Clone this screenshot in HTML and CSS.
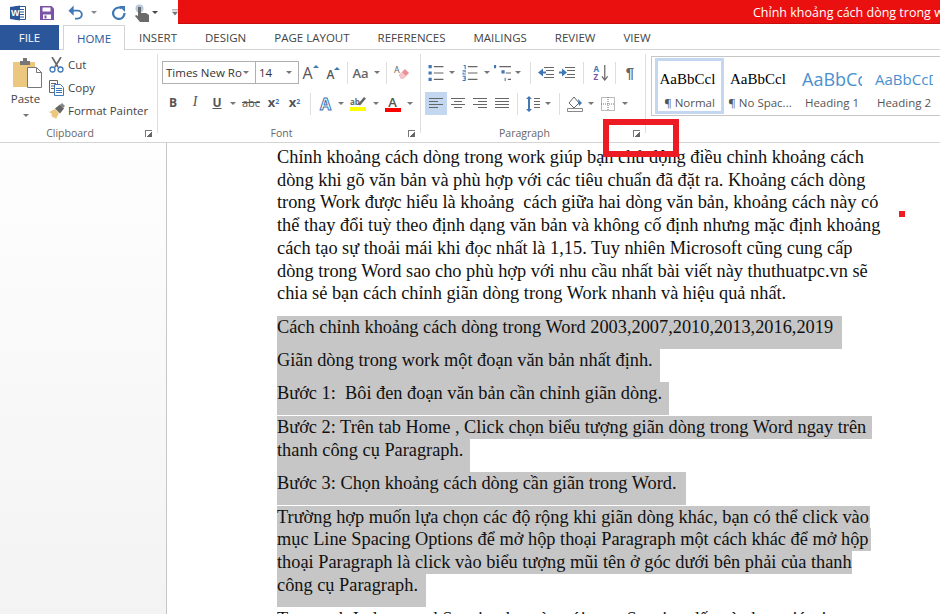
FILE: index.html
```html
<!DOCTYPE html>
<html lang="vi">
<head>
<meta charset="utf-8">
<title>Chỉnh khoảng cách dòng trong work - Word</title>
<link rel="stylesheet" href="styles.css">
</head>
<body>
<div class="app">
  <header class="titlebar">
    <div class="qat">
      <svg class="q q-word" viewBox="0 0 16 16"><path fill="#fff" stroke="#2b579a" d="M5.5 1.5h10v13h-10z"/><path stroke="#2b579a" d="M9 4.5h5M9 7h5M9 9.500h5M9 12h5"/><path fill="#2b579a" d="M0 2l10-1.500v15L0 14z"/><text x="1" y="11" class="word-w">W</text></svg>
      <svg class="q q-save" viewBox="0 0 14 14"><path fill="#7b52a6" d="M0 0h11.500L14 2.500V14H0z"/><path fill="#fff" d="M2.500 1.500h8v4h-8zM3 8.500h8V13H3z"/><path fill="#7b52a6" d="M4.500 9.500h2v3h-2z"/></svg>
      <svg class="q q-undo" viewBox="0 0 15 16"><path fill="none" stroke="#3f78b5" stroke-width="2" d="M3 6h7a4 4 0 0 1 0 8.500H7"/><path fill="#3f78b5" d="M5.500 .5v11L0 6z"/></svg>
      <span class="qcaret q-c1"></span>
      <svg class="q q-redo" viewBox="0 0 14 14"><path fill="none" stroke="#3f78b5" stroke-width="2.200" d="M9.500 2.200a5.700 5.700 0 1 0 3 4.800"/><path fill="#3f78b5" d="M7 0h6v6z"/></svg>
      <svg class="q q-touch" viewBox="0 0 14 18"><circle cx="4.500" cy="4.500" r="4" fill="#b7c9dc"/><path fill="#6a6a6a" d="M3 3h3v6h5l3 2v7H5l-5-6 1-1 2 1z"/></svg>
      <span class="qcaret dark q-c2"></span>
      <svg class="q q-cust" viewBox="0 0 8 8"><path fill="#777" d="M0 0h8v1H0zM0 3h8L4 8z"/></svg>
    </div>
    <div class="redbar"><span class="doc-title">Chỉnh khoảng cách dòng trong work - Word</span></div>
  </header>

  <nav class="tabs">
    <span class="tab file">FILE</span>
    <span class="tab home">HOME</span>
    <span class="tab">INSERT</span>
    <span class="tab">DESIGN</span>
    <span class="tab">PAGE LAYOUT</span>
    <span class="tab">REFERENCES</span>
    <span class="tab">MAILINGS</span>
    <span class="tab">REVIEW</span>
    <span class="tab">VIEW</span>
  </nav>

  <section class="ribbon">
    <div class="group g-clip">
      <div class="clip-body">
        <div class="paste">
          <svg class="paste-ico" viewBox="0 0 29 30"><path fill="#ebc77f" d="M0 4h22v25H0z"/><path fill="#777" d="M7 3h3V0h4v3h3v4H7z"/><path fill="#fff" stroke="#777" d="M14.500 9.500h9l5 5v15h-14z"/><path fill="none" stroke="#777" d="M23.500 9.500v5h5"/></svg>
          <span class="paste-label">Paste</span>
          <span class="caret"></span>
        </div>
        <div class="clip-list">
          <div class="clip-item"><svg viewBox="0 0 15 16"><path fill="none" stroke="#6a6a6a" stroke-width="1.700" d="M3 0l6 10M12 0L6 10"/><circle cx="3.500" cy="12.500" r="2.500" fill="none" stroke="#3f78b5" stroke-width="1.300"/><circle cx="11.500" cy="12.500" r="2.500" fill="none" stroke="#3f78b5" stroke-width="1.300"/></svg><span>Cut</span></div>
          <div class="clip-item"><svg viewBox="0 0 15 16"><path fill="#fff" stroke="#666" d="M.5 .5h8v12h-8z"/><path stroke="#666" d="M2 3.500h5M2 6h3M2 8.500h3"/><path fill="#fff" stroke="#3f78b5" d="M5.500 4.500h6l3 3v8h-9z"/><path stroke="#3f78b5" d="M7 8.500h6M7 10.500h6M7 12.500h6"/></svg><span>Copy</span></div>
          <div class="clip-item"><svg viewBox="0 0 16 16"><path fill="#ebc77f" d="M0 9l6-3 4 4-3 6-2-2-1 1-1-2-1 0 1-2z"/><path fill="#666" d="M6 5.500l5-4 4 4-4 5z"/><path fill="#888" d="M11 2l2-2 3 3-2 2z"/></svg><span>Format Painter</span></div>
        </div>
      </div>
      <div class="group-label"><span>Clipboard</span><i class="launcher"></i></div>
    </div>

    <div class="group g-font">
      <div class="rows">
        <div class="row">
          <div class="combo font-name"><span>Times New Ro</span><span class="caret"></span></div>
          <div class="combo font-size"><span>14</span><span class="caret"></span></div>
          <span class="b s23 letter big">A<i class="up"></i></span>
          <span class="b s23 letter mid">A<i class="up"></i></span>
          <span class="b s4"><i class="sep"></i></span>
          <span class="b s23 letter aa">Aa</span>
          <span class="b s10"><span class="caret"></span></span>
          <span class="b s8"><i class="sep"></i></span>
          <span class="b s24"><svg class="i16" viewBox="0 0 16 16"><path fill="#ee8f96" d="M5 10l6-6 4 4-6 6H7z"/><path fill="#f4c6c9" d="M5 10l3-3 4 4-3 3H7z"/><text x="0" y="8" class="eraser-a">A</text></svg></span>
        </div>
        <div class="row">
          <span class="b s22 bt">B</span>
          <span class="b s22 bt it">I</span>
          <span class="b s22 bt ul">U</span>
          <span class="b s10"><span class="caret"></span></span>
          <span class="b s26 abc">abc</span>
          <span class="b s19 bt sm">x<sub>2</sub></span>
          <span class="b s23 bt sm">x<sup>2</sup></span>
          <span class="b s9"><i class="sep"></i></span>
          <span class="b s21"><span class="effect-a">A</span></span>
          <span class="b s9"><span class="caret"></span></span>
          <span class="b s26"><span class="color-btn hl"><svg viewBox="0 0 16 11"><text x="0" y="9" class="hl-t">ab</text><path fill="#666" d="M8 8l6-7 2 1.500-6 7z"/></svg><i></i></span></span>
          <span class="b s9"><span class="caret"></span></span>
          <span class="b s25"><span class="color-btn fc"><span>A</span><i></i></span></span>
          <span class="b s9"><span class="caret"></span></span>
        </div>
      </div>
      <div class="group-label"><span>Font</span><i class="launcher"></i></div>
    </div>

    <div class="group g-para">
      <div class="rows">
        <div class="row">
          <span class="b s22"><svg class="i16" viewBox="0 0 14 15"><path fill="#3f78b5" d="M0 0h3v3H0zM0 6h3v3H0zM0 12h3v3H0z"/><path fill="#666" d="M5 1h9v1H5zM5 7h9v1H5zM5 13h9v1H5z"/></svg></span>
          <span class="b s10"><span class="caret"></span></span>
          <span class="b s25"><svg class="i16" viewBox="0 0 14 15"><path fill="#3f78b5" d="M1 0h2v4H2V1H1zM0 5h3v2H1v1h2v1H0V7h2V6H0zM0 10h3v5H0v-1h2v-1H1v-1h1v-1H0z"/><path fill="#666" d="M5 1h9v1H5zM5 7h9v1H5zM5 13h9v1H5z"/></svg></span>
          <span class="b s9"><span class="caret"></span></span>
          <span class="b s22"><svg class="i17" viewBox="0 0 16 15"><path fill="#3f78b5" d="M0 0h2v3H0zM7 5h3v3H7zM10 12h1v3h-1z"/><path fill="#666" d="M5 1h11v1H5zM11 7h5v1h-5zM13 13h3v1h-3z"/></svg></span>
          <span class="b s10"><span class="caret"></span></span>
          <span class="b s14"><i class="sep"></i></span>
          <span class="b s18"><svg class="i16" viewBox="0 0 16 12"><path fill="#666" d="M6 0h10v1H6zM8 3h8v1H8zM8 7h8v1H8zM6 10h10v1H6z"/><path fill="#3f78b5" d="M0 5.500L5 1.500v3h3v2H5v3z"/></svg></span>
          <span class="b s24"><svg class="i16" viewBox="0 0 16 12"><path fill="#666" d="M6 0h10v1H6zM8 3h8v1H8zM8 7h8v1H8zM6 10h10v1H6z"/><path fill="#3f78b5" d="M8 5.500L3 1.500v3H0v2h3v3z"/></svg></span>
          <span class="b s8"><i class="sep"></i></span>
          <span class="b s27"><svg class="i16" viewBox="0 0 16 17"><text x="0" y="7" class="az a">A</text><text x="0" y="16" class="az z">Z</text><path stroke="#666" stroke-width="1.300" d="M12 0v15"/><path fill="none" stroke="#666" stroke-width="1.300" d="M9 12l3 4 3-4"/></svg></span>
          <span class="b s2"><i class="sep"></i></span>
          <span class="b s28 pilcrow">¶</span>
        </div>
        <div class="row">
          <span class="b s22 on"><svg class="i14" viewBox="0 0 14 11"><path fill="#666" d="M0 0h14v1H0zM0 3h9v1H0zM0 6h14v1H0zM0 9h9v1H0z"/></svg></span>
          <span class="b s22"><svg class="i14" viewBox="0 0 14 11"><path fill="#666" d="M0 0h14v1H0zM3 3h8v1H3zM0 6h14v1H0zM3 9h8v1H3z"/></svg></span>
          <span class="b s22"><svg class="i14" viewBox="0 0 14 11"><path fill="#666" d="M0 0h14v1H0zM5 3h9v1H5zM0 6h14v1H0zM5 9h9v1H5z"/></svg></span>
          <span class="b s22"><svg class="i14" viewBox="0 0 14 11"><path fill="#666" d="M0 0h14v1H0zM0 3h14v1H0zM0 6h14v1H0zM0 9h14v1H0z"/></svg></span>
          <span class="b s8"><i class="sep"></i></span>
          <span class="b s23"><svg class="i14 tall" viewBox="0 0 14 16"><path fill="#3f78b5" d="M0 3l3-3 3 3H4v10h2l-3 3-3-3h2V3z"/><path fill="#666" d="M8 2h6v1H8zM8 5h6v1H8zM8 8h6v1H8zM8 11h6v1H8z"/></svg></span>
          <span class="b s7"><span class="caret"></span></span>
          <span class="b s16"><i class="sep"></i></span>
          <span class="b s16"><svg class="i16" viewBox="0 0 16 16"><path fill="#fff" stroke="#666" d="M2 7l5-6 5 6-5 5z"/><path fill="#3f78b5" d="M11 3l4 4-3 3z"/><path fill="#fff" stroke="#888" d="M.5 12.500h15v3H.5z"/></svg></span>
          <span class="b s16"><span class="caret"></span></span>
          <span class="b s18"><svg class="i14 tall" viewBox="0 0 14 14"><path fill="none" stroke="#777" stroke-dasharray="1 1" d="M.5 .5h13v13H.5zM7 0v14M0 7h14"/></svg></span>
          <span class="b s16"><span class="caret"></span></span>
        </div>
      </div>
      <div class="group-label"><span>Paragraph</span><i class="launcher"></i></div>
    </div>

    <div class="g-styles">
      <div class="gallery">
        <div class="style-tile active"><span class="sample serif">AaBbCcl</span><span class="style-name">¶ Normal</span></div>
        <div class="style-tile w2"><span class="sample serif">AaBbCcl</span><span class="style-name">¶ No Spac...</span></div>
        <div class="style-tile w3"><span class="sample h1">AaBbCc</span><span class="style-name">Heading 1</span></div>
        <div class="style-tile w4"><span class="sample h2">AaBbCcD</span><span class="style-name">Heading 2</span></div>
      </div>
    </div>
  </section>

  <main class="workspace">
    <aside class="nav-pane"></aside>
    <article class="page">
      <p class="para intro">Chỉnh khoảng cách dòng trong work giúp bạn chủ động điều chỉnh khoảng cách
dòng khi gõ văn bản và phù hợp với các tiêu chuẩn đã đặt ra. Khoảng cách dòng
trong Work được hiểu là khoảng  cách giữa hai dòng văn bản, khoảng cách này có
thể thay đổi tuỳ theo định dạng văn bản và không cố định nhưng mặc định khoảng
cách tạo sự thoải mái khi đọc nhất là 1,15. Tuy nhiên Microsoft cũng cung cấp
dòng trong Word sao cho phù hợp với nhu cầu nhất bài viết này thuthuatpc.vn sẽ
chia sẻ bạn cách chỉnh giãn dòng trong Work nhanh và hiệu quả nhất.</p>
      <div class="sel-block">
        <span class="sel last w565">Cách chỉnh khoảng cách dòng trong Word 2003,2007,2010,2013,2016,2019</span>
        <span class="sel last w383">Giãn dòng trong work một đoạn văn bản nhất định.</span>
        <span class="sel last w392">Bước 1:  Bôi đen đoạn văn bản cần chỉnh giãn dòng.</span>
      </div>
      <div class="sel-block">
        <span class="sel w595">Bước 2: Trên tab Home , Click chọn biểu tượng giãn dòng trong Word ngay trên</span>
        <span class="sel last w193">thanh công cụ Paragraph.</span>
        <span class="sel last w409">Bước 3: Chọn khoảng cách dòng cần giãn trong Word.</span>
      </div>
      <div class="sel-block">
        <span class="sel w593">Trường hợp muốn lựa chọn các độ rộng khi giãn dòng khác, bạn có thể click vào</span>
        <span class="sel w594">mục Line Spacing Options để mở hộp thoại Paragraph một cách khác để mở hộp</span>
        <span class="sel w575">thoại Paragraph là click vào biểu tượng mũi tên ở góc dưới bên phải của thanh</span>
        <span class="sel last w149">công cụ Paragraph.</span>
      </div>
      <p class="para">Trong tab Indents and Spacing bạn tìm tới mục Spacing dấu và chọn giá trị</p>
    </article>
  </main>

  <i class="mark-box"></i>
  <i class="mark-dot"></i>
</div>
</body>
</html>
```

FILE: styles.css
```css
* { box-sizing: border-box; }
html, body { margin: 0; height: 100%; overflow: hidden; background: #fff; }
.app { position: relative; width: 940px; height: 614px; overflow: hidden; display: flex; flex-direction: column; font-family: "Open Sans", "Noto Sans", sans-serif; color: #444; }

/* title bar */
.titlebar { display: flex; height: 25px; flex: none; }
.qat { position: relative; width: 178px; flex: none; display: flex; align-items: center; }
.q { display: block; flex: none; }
.q-word { width: 16px; height: 16px; margin-left: 10px; }
.word-w { font: bold 9px "Liberation Sans", sans-serif; fill: #fff; }
.q-save { width: 14px; height: 14px; margin-left: 14px; }
.q-undo { width: 15px; height: 15px; margin-left: 14px; }
.q-c1 { margin-left: 8px; }
.q-redo { width: 14px; height: 14px; margin-left: 15px; }
.q-touch { width: 14px; height: 18px; margin-left: 9px; }
.q-c2 { margin-left: 3px; }
.q-cust { width: 6px; height: 7px; margin-left: 14px; }
.qcaret { width: 0; height: 0; flex: none; border: 3px solid transparent; border-top: 3px solid #888; border-bottom: 0; }
.qcaret.dark { border-top-color: #444; }
.redbar { flex: 1; height: 24px; background: #ea1010; border-bottom: 1px solid #c40d0d; padding-left: 575px; overflow: hidden; white-space: nowrap; }
.doc-title { color: #fff; font-size: 12.5px; line-height: 25px; }

/* tabs */
.tabs { height: 25px; flex: none; display: flex; align-items: stretch; border-bottom: 1px solid #d4d4d4; font-size: 11.5px; color: #444; }
.tab { display: flex; align-items: center; padding: 1px 14px 0; white-space: nowrap; }
.tab.file { width: 59px; justify-content: center; background: #2b579a; color: #fff; margin-bottom: -1px; margin-right: 4px; padding: 0; }
.tab.home { width: 62px; justify-content: center; padding: 0; color: #2b579a; background: #fff; border: 1px solid #d4d4d4; border-bottom: 0; margin-bottom: -1px; }

/* ribbon */
.ribbon { height: 93px; flex: none; display: flex; border-bottom: 1px solid #d4d4d4; }
.group { display: flex; flex-direction: column; flex: none; position: relative; padding-top: 4px; }
.group::after { content: ""; position: absolute; right: 0; top: 4px; bottom: 9px; width: 1px; background: #dedede; }
.g-clip { width: 158px; }
.g-font { width: 263px; padding-left: 4px; }
.g-para { width: 225px; padding-left: 4px; }
.group-label { position: absolute; left: 0; right: 0; bottom: 0; height: 17px; text-align: center; font-size: 10.5px; line-height: 16px; color: #666; }
.g-clip .group-label { padding-right: 18px; }
.g-font .group-label { padding-right: 16px; }
.g-para .group-label { padding-right: 18px; }
.launcher { position: absolute; right: 6px; top: 5px; width: 7px; height: 7px; border-left: 1px solid #777; border-top: 1px solid #777; background: linear-gradient(135deg, transparent 55%, #666 55%); }

/* clipboard */
.clip-body { display: flex; }
.paste { width: 49px; display: flex; flex-direction: column; align-items: center; padding-left: 5px; }
.paste-ico { width: 29px; height: 30px; margin-top: 4px; }
.paste-label { font-size: 11.5px; line-height: 16px; margin-top: 3px; margin-left: -3px; }
.paste .caret { margin-top: 7px; margin-left: -3px; }
.clip-list { display: flex; flex-direction: column; margin-top: -1px; }
.clip-item { display: flex; align-items: center; height: 23px; font-size: 11.5px; }
.clip-item svg { width: 15px; height: 16px; margin-right: 4px; flex: none; }
.clip-item:nth-child(3) svg { width: 16px; margin-right: 3px; }

/* rows and buttons */
.rows { display: flex; flex-direction: column; }
.row { display: flex; align-items: center; height: 23px; margin-top: 7px; }
.row + .row { margin-top: 8px; }
.b { display: flex; align-items: center; justify-content: center; height: 23px; flex: none; position: relative; }
.s2 { width: 2px; } .s4 { width: 4px; } .s7 { width: 7px; } .s8 { width: 8px; } .s9 { width: 9px; }
.s10 { width: 10px; } .s14 { width: 14px; } .s16 { width: 16px; } .s18 { width: 18px; } .s19 { width: 19px; }
.s21 { width: 21px; } .s22 { width: 22px; } .s23 { width: 23px; } .s24 { width: 24px; } .s25 { width: 25px; }
.s26 { width: 26px; } .s27 { width: 27px; } .s28 { width: 28px; }
.b.on { background: #c3d7f0; }
.sep { display: block; width: 1px; height: 22px; background: #dedede; }
.caret { display: inline-block; width: 0; height: 0; border: 3px solid transparent; border-top: 3px solid #777; border-bottom: 0; flex: none; }
.i16 { width: 16px; height: 16px; }
.i17 { width: 17px; height: 16px; }
.i14 { width: 14px; height: 11px; }
.i14.tall { height: 16px; }

.combo { height: 23px; display: flex; align-items: center; justify-content: space-between; background: #fff; border: 1px solid #b0b0b0; font-family: "Open Sans", sans-serif; font-size: 11.5px; color: #333; padding: 0 6px 0 3px; flex: none; white-space: nowrap; }
.font-name { width: 94px; }
.font-size { width: 43px; margin-left: 0; border-left: 0; }
.letter { color: #555; font-family: "Open Sans", sans-serif; }
.letter.big { font-size: 16px; }
.letter.mid { font-size: 12px; font-weight: 600; padding-top: 3px; }
.letter.aa { font-size: 13px; font-weight: 600; color: #666; }
.up { width: 0; height: 0; border: 3px solid transparent; border-bottom: 3px solid #3f78b5; border-top: 0; margin-top: -12px; }
.bt { font: bold 12px "Open Sans", sans-serif; color: #555; padding-bottom: 3px; }
.it { font-style: italic; font-weight: 400; font-family: "Liberation Serif", serif; font-size: 14px; }
.ul { text-decoration: underline; }
.sm { font-size: 13px; }
.sm sub, .sm sup { font-size: 7px; color: #3f78b5; line-height: 0; }
.abc { font-size: 11px; color: #555; text-decoration: line-through; padding-bottom: 3px; }
.effect-a { font: bold 16px "Open Sans", sans-serif; color: #fff; -webkit-text-stroke: 1px #3f78b5; }
.color-btn { display: flex; flex-direction: column; align-items: center; width: 16px; }
.color-btn svg { width: 16px; height: 11px; display: block; }
.color-btn i { display: block; width: 16px; height: 4px; }
.color-btn span { font: 600 13px/12px "Open Sans", sans-serif; color: #555; }
.hl i { background: #ffff00; }
.fc i { background: #ff0000; }
.hl-t { font: bold 8px "Open Sans", sans-serif; fill: #666; }
.eraser-a { font: 9px "Open Sans", sans-serif; fill: #666; }
.az { font: bold 8.500px "Open Sans", sans-serif; }
.az.a { fill: #3f78b5; }
.az.z { fill: #7b52a6; }
.pilcrow { font-size: 15px; font-weight: 600; color: #666; font-family: "Liberation Sans", sans-serif; }

/* styles gallery */
.g-styles { flex: 1; padding: 6px 0 0 5px; min-width: 0; }
.gallery { height: 60px; display: flex; border: 1px solid #c6c6c6; border-right: 0; padding: 1px 0 1px 3px; overflow: hidden; }
.style-tile { display: flex; flex-direction: column; align-items: center; justify-content: flex-start; height: 56px; width: 69px; flex: none; overflow: hidden; padding-top: 9px; white-space: nowrap; }
.style-tile.active { border: 3px solid #c3d7f0; padding-top: 6px; }
.style-tile.w2 { width: 72px; }
.style-tile.w3 { width: 72px; }
.style-tile.w4 { width: 72px; }
.sample { height: 24px; width: 60px; overflow: hidden; display: block; color: #000; line-height: 24px; text-align: left; }
.sample.serif { font: 15px/24px "Liberation Serif", serif; }
.sample.h1 { font: 18px/24px "Open Sans", sans-serif; color: #4a90d0; }
.sample.h2 { font: 15px/24px "Open Sans", sans-serif; color: #4a90d0; width: 58px; }
.style-name { font-size: 11.5px; line-height: 16px; color: #555; margin-top: 4px; }

/* document */
.workspace { flex: 1; min-height: 0; display: flex; overflow: hidden; }
.nav-pane { width: 167px; flex: none; background: linear-gradient(#fefefe, #f3f3f3); border-right: 1px solid #c6c6c6; }
.page { flex: 1; padding: 3px 0 0 110px; font: 18.33px/22.7px "Liberation Serif", serif; color: #111; }
.para { margin: 0; white-space: pre; }
.para.intro { margin-bottom: 11px; }
.sel-block { margin-bottom: 1px; }
.sel { display: block; background: #c6c6c6; height: 22.7px; white-space: pre; }
.sel.last { height: 33px; }
.w149 { width: 149px; } .w193 { width: 193px; } .w383 { width: 383px; } .w392 { width: 392px; }
.w409 { width: 409px; } .w565 { width: 565px; } .w575 { width: 575px; } .w593 { width: 593px; }
.w594 { width: 594px; } .w595 { width: 595px; }

/* annotations */
.mark-box { position: absolute; left: 603px; top: 119px; width: 76px; height: 38px; border: 6px solid #ed1c24; }
.mark-dot { position: absolute; left: 899px; top: 211px; width: 6px; height: 6px; background: #ed1c24; }
```
